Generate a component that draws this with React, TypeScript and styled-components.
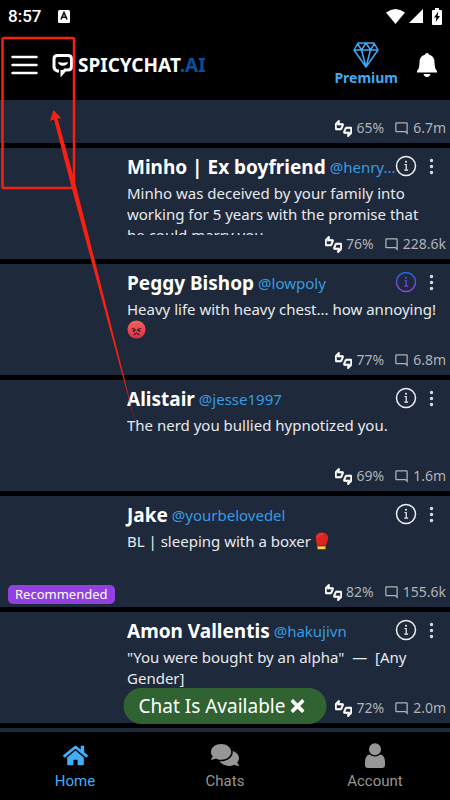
import React from "react";
import styled, { createGlobalStyle } from "styled-components";
import { MdOutlineThumbsUpDown, MdOutlineModeComment } from "react-icons/md";
import { BsThreeDotsVertical } from "react-icons/bs";
import { FaHome, FaComments } from "react-icons/fa";
import { ImCross } from "react-icons/im";

const Global = createGlobalStyle`
  * { box-sizing: border-box; }
  body { margin: 0; background: #000; color: #fff; font-family: "Noto Sans", sans-serif; }
  button { font: inherit; color: inherit; background: none; border: 0; padding: 0; display: flex; align-items: center; justify-content: center; cursor: pointer; }
  a { color: inherit; text-decoration: none; }
  h1, h2, p { margin: 0; }
  svg { display: block; flex: none; }
`;

const Screen = styled.div`
  position: relative;
  display: flex;
  flex-direction: column;
  height: 100vh;
  overflow: hidden;
`;
const StatusBar = styled.div`
  display: flex;
  align-items: center;
  height: 32px;
  flex: none;
  padding: 0 8px;
  font: 500 17px/32px Roboto, sans-serif;
`;
const StatusIcons = styled.div`
  display: flex;
  align-items: center;
  margin-left: auto;
  gap: 4px;
`;
const BadgeIcon = styled.svg`
  margin-left: 17px;
`;
const BatteryIcon = styled.svg`
  margin-left: 5px;
`;
const Header = styled.header`
  display: flex;
  align-items: center;
  height: 68px;
  flex: none;
  padding: 0 11px 2px 11px;
`;
const Brand = styled.h1`
  display: flex;
  align-items: center;
  gap: 4px;
  margin-left: 14px;
  font: 700 19px/24px "Noto Sans", sans-serif;
`;
const BrandSuffix = styled.span`
  color: #0b509b;
`;
const PremiumLink = styled.a`
  display: flex;
  flex-direction: column;
  align-items: center;
  margin-left: auto;
  margin-right: 17px;
  && { color: #3fa9f5; }
  font: 700 14px/20px "Noto Sans", sans-serif;
`;
const List = styled.main`
  display: flex;
  flex-direction: column;
  flex: 1;
  min-height: 0;
  gap: 5px;
  overflow: hidden;
`;
const Card = styled.article<{ $partial?: boolean }>`
  display: flex;
  flex: none;
  height: ${(p) => (p.$partial ? 43 : 111)}px;
  background: #1e293b;
  overflow: hidden;
`;
const Picture = styled.div`
  display: flex;
  align-items: flex-end;
  width: 127px;
  flex: none;
  padding: 0 0 3px 8px;
`;
const Tag = styled.span`
  padding: 0 7px;
  border-radius: 5px;
  background: #9240e0;
  font-size: 13px;
  line-height: 19px;
`;
const Body = styled.div`
  display: flex;
  flex-direction: column;
  flex: 1;
  min-width: 0;
  padding: 6px 4px 6px 0;
`;
const TitleRow = styled.div`
  display: flex;
  align-items: center;
  height: 26px;
  flex: none;
  padding-right: 5px;
`;
const Name = styled.h2`
  font-size: 19px;
  line-height: 26px;
  white-space: nowrap;
`;
const Handle = styled.a`
  min-width: 0;
  margin-left: 4px;
  white-space: nowrap;
  && { color: #3a9be0; }
  font-size: 15px;
  line-height: 26px;
`;
const Actions = styled.div`
  display: flex;
  align-items: center;
  gap: 5px;
  margin-left: auto;
  padding-bottom: 2px;
`;
const Description = styled.p`
  height: 52px;
  flex: none;
  margin-top: 3px;
  padding-right: 8px;
  overflow: hidden;
  color: #e8eaed;
  font-size: 15px;
  line-height: 21px;
  white-space: pre-wrap;
`;
const Stats = styled.div`
  display: flex;
  align-items: center;
  justify-content: flex-end;
  margin-top: auto;
  height: 18px;
  flex: none;
  color: #b0b3b8;
  font-size: 14px;
  line-height: 18px;
`;
const Rating = styled.span`
  display: flex;
  align-items: center;
  gap: 4px;
  margin-right: 10px;
  svg { color: #fff; }
  svg path:last-child { stroke: #fff; stroke-width: 1px; }
`;
const Messages = styled.span`
  display: flex;
  align-items: center;
  gap: 4px;
`;
const Emoji = styled.svg`
  display: inline-block;
  vertical-align: -3px;
`;
const Nav = styled.nav`
  display: grid;
  grid-template-columns: repeat(3, 1fr);
  height: 68px;
  flex: none;
`;
const NavItem = styled.a<{ $active?: boolean }>`
  display: flex;
  flex-direction: column;
  align-items: center;
  padding-top: 10px;
  gap: 3px;
  && { color: ${(p) => (p.$active ? "#42adfa" : "#969696")}; }
  font: 400 15px/20px Roboto, sans-serif;
`;
const NavIcon = styled.span`
  display: flex;
  align-items: center;
  height: 26px;
`;
const Toast = styled.div`
  position: absolute;
  left: 50%;
  bottom: 76px;
  transform: translateX(-50%);
  display: flex;
  align-items: center;
  gap: 5px;
  height: 36px;
  padding: 0 22px 0 15px;
  border-radius: 18px;
  background: #306331;
  font-size: 19px;
  line-height: 36px;
  white-space: nowrap;
`;
const Marker = styled.svg`
  position: absolute;
  left: 0;
  top: 0;
  pointer-events: none;
`;

const AngryFace = () => (
  <Emoji width="19" height="19" viewBox="0 0 20 20" role="img" aria-label="angry face">
    <defs>
      <linearGradient id="face" x1="0" y1="0" x2="0" y2="1">
        <stop offset="0" stopColor="#f4635b" />
        <stop offset="1" stopColor="#dc2f48" />
      </linearGradient>
    </defs>
    <circle cx="10" cy="10" r="9.5" fill="url(#face)" />
    <path d="M5.500 9q2.500.2 3.800 1.800M14.500 9q-2.500.2-3.800 1.800M7.500 15.300q2.500-2.400 5 0" fill="none" stroke="#3c2024" strokeWidth="1.200" strokeLinecap="round" />
    <circle cx="7.200" cy="11.500" r="1.200" fill="#3c2024" />
    <circle cx="12.800" cy="11.500" r="1.200" fill="#3c2024" />
  </Emoji>
);
const BoxingGlove = () => (
  <Emoji width="14" height="18" viewBox="0 0 14 18" role="img" aria-label="boxing glove">
    <path d="M2 13.5 1 8C-.2 3.5 2 .5 6.500.5c4.500 0 7 2.500 6.500 6.500-.3 3-1.400 4.400-2.500 6.500z" fill="#dc2422" />
    <path d="M3 5c.8-2 2.500-2.800 4.500-2.500" fill="none" stroke="#f0524a" />
    <path d="M2.500 13h8v4.300h-8z" fill="#fbc02d" />
    <path d="M2.500 13h8v1.300h-8z" fill="#b31317" />
    <path d="M4.500 15h4v1.300h-4z" fill="#fff3b0" />
  </Emoji>
);

type Character = {
  name?: string;
  handle?: string;
  text?: React.ReactNode;
  rating: string;
  messages: string;
  recommended?: boolean;
  highlight?: boolean;
};

const characters: Character[] = [
  { rating: "65%", messages: "6.7m" },
  {
    name: "Minho | Ex boyfriend",
    handle: "@henry...",
    text: "Minho was deceived by your family into working for 5 years with the promise that he could marry you",
    rating: "76%",
    messages: "228.6k",
  },
  {
    name: "Peggy Bishop",
    handle: "@lowpoly",
    text: <>Heavy life with heavy chest... how annoying! <AngryFace /></>,
    rating: "77%",
    messages: "6.8m",
    highlight: true,
  },
  { name: "Alistair", handle: "@jesse1997", text: "The nerd you bullied hypnotized you.", rating: "69%", messages: "1.6m" },
  {
    name: "Jake",
    handle: "@yourbelovedel",
    text: <>BL | sleeping with a boxer <BoxingGlove /></>,
    rating: "82%",
    messages: "155.6k",
    recommended: true,
  },
  { name: "Amon Vallentis", handle: "@hakujivn", text: '"You were bought by an alpha"  —  [Any Gender]', rating: "72%", messages: "2.0m" },
];

const InfoIcon = ({ highlight }: { highlight?: boolean }) => (
  <svg width="22" height="22" viewBox="0 0 22 22">
    <defs>
      <linearGradient id="violet" x1="0" y1="0" x2="0" y2="22" gradientUnits="userSpaceOnUse">
        <stop offset="0" stopColor="#1769e0" />
        <stop offset="1" stopColor="#9b3fdc" />
      </linearGradient>
    </defs>
    <g fill="none" stroke={highlight ? "url(#violet)" : "#eef0f2"}>
      <circle cx="11" cy="11" r="9.500" strokeWidth="1.500" />
      <path d="M9.500 9.500H11.200V15M9.300 15.200h3.800" strokeWidth="1.200" />
    </g>
    <circle cx="11" cy="6.700" r="1" fill={highlight ? "#5a55de" : "#eef0f2"} />
  </svg>
);

const CharacterCard = ({ item }: { item: Character }) => (
  <Card $partial={!item.name}>
    <Picture>{item.recommended && <Tag>Recommended</Tag>}</Picture>
    <Body>
      {item.name && (
        <>
          <TitleRow>
            <Name>{item.name}</Name>
            <Handle href="#profile">{item.handle}</Handle>
            <Actions>
              <button aria-label={`About ${item.name}`}><InfoIcon highlight={item.highlight} /></button>
              <button aria-label="More options"><BsThreeDotsVertical size={19} color="#d5d7da" /></button>
            </Actions>
          </TitleRow>
          <Description>{item.text}</Description>
        </>
      )}
      <Stats>
        <Rating><MdOutlineThumbsUpDown size={17} />{item.rating}</Rating>
        <Messages><MdOutlineModeComment size={15} />{item.messages}</Messages>
      </Stats>
    </Body>
  </Card>
);

export default function App() {
  return (
    <Screen>
      <Global />
      <StatusBar>
        <span>8:57</span>
        <BadgeIcon width="12" height="13" viewBox="0 0 12 13">
          <rect width="12" height="13" rx="1.500" fill="#fff" />
          <path d="m3 9.500 3-7 3 7M4.200 7.300h3.600" fill="none" stroke="#111" strokeWidth="1.600" />
        </BadgeIcon>
        <StatusIcons>
          <svg width="19" height="15" viewBox="0 0 19 15"><path d="M0 3.500Q9.500-3.500 19 3.500L9.500 15z" fill="#fff" /></svg>
          <svg width="14" height="14" viewBox="0 0 14 14"><path d="M14 0v14H0z" fill="#fff" /></svg>
          <BatteryIcon width="10" height="17" viewBox="0 0 10 17">
            <path d="M3 0h4v2h2q1 0 1 1v13q0 1-1 1H1q-1 0-1-1V3q0-1 1-1h2z" fill="#fff" />
            <path d="M6.300 3.500 2 9.500h2.300L3.700 14 8 8H5.700z" fill="#000" />
          </BatteryIcon>
        </StatusIcons>
      </StatusBar>
      <Header>
        <button aria-label="Menu">
          <svg width="27" height="20" viewBox="0 0 27 20"><path d="M1.500 2h24M1.500 10h24M1.500 18h24" stroke="#fff" strokeWidth="2.400" strokeLinecap="round" /></svg>
        </button>
        <Brand>
          <svg width="22" height="24" viewBox="0 0 22 24">
            <path d="M7 18H5.500Q2 17 2 13.500V6q0-3.500 3.500-3.500h10.500q3.500 0 3.500 3.500v7.500q0 3.500-3.500 3.500h-3l-3 3.500V17" fill="none" stroke="#fff" strokeWidth="3" />
            <path d="M6 9q5 1.600 10 0-.8 3.800-5 3.800T6 9z" fill="#fff" />
          </svg>
          <span>SPICYCHAT<BrandSuffix>.AI</BrandSuffix></span>
        </Brand>
        <PremiumLink href="#premium">
          <svg width="26" height="26" viewBox="0 0 26 26" fill="none" stroke="#3fa9f5" strokeWidth="1.500" strokeLinejoin="round">
            <path d="M5 1h16l4 7-12 17L1 8zM1 8h24M4.500 1.500 8.500 8 13 1l4.500 7 4-6.500M8.500 8 13 25l4.500-17" />
          </svg>
          Premium
        </PremiumLink>
        <button aria-label="Notifications">
          <svg width="24" height="26" viewBox="0 0 24 26" fill="#fff">
            <path d="M12 1q1.700 0 2.200 1.700Q19.500 4 19.500 10.500q0 6 2.500 8.500v1.500H2V19q2.500-2.500 2.500-8.500Q4.500 4 9.800 2.700 10.300 1 12 1zM8.500 22h7q-.7 3-3.500 3t-3.500-3z" />
          </svg>
        </button>
      </Header>
      <List>
        {characters.map((item, i) => <CharacterCard key={i} item={item} />)}
        <Card />
      </List>
      <Nav>
        <NavItem href="#home" $active><NavIcon><FaHome size={25} /></NavIcon>Home</NavItem>
        <NavItem href="#chats"><NavIcon><FaComments size={28} /></NavIcon>Chats</NavItem>
        <NavItem href="#account">
          <NavIcon>
            <svg width="20" height="25" viewBox="0 0 20 25" fill="currentColor"><circle cx="10" cy="6.200" r="6" /><path d="M4.500 11.500Q10 15.500 15.500 11.500 20 12.500 20 19v3q0 3-3 3H3q-3 0-3-3v-3q0-6.500 4.500-7.500z" /></svg>
          </NavIcon>
          Account
        </NavItem>
      </Nav>
      <Toast role="status">
        Chat Is Available
        <button aria-label="Dismiss"><ImCross size={14} /></button>
      </Toast>
      <Marker width="150" height="450" viewBox="0 0 150 450" aria-hidden="true">
        <defs>
          <linearGradient id="tail" x1="0" y1="110" x2="0" y2="448" gradientUnits="userSpaceOnUse">
            <stop offset="0" stopColor="#f81f13" />
            <stop offset=".78" stopColor="#f81f13" />
            <stop offset="1" stopColor="#f81f13" stopOpacity="0" />
          </linearGradient>
        </defs>
        <rect x="2.500" y="38" width="71.500" height="150" rx="1.500" fill="none" stroke="#f81f13" strokeWidth="2.500" />
        <path d="M53.500 110 61.500 118.500 57.500 118 76 186 142 448 71.500 187 54 119.500 50 121z" fill="url(#tail)" />
      </Marker>
    </Screen>
  );
}
